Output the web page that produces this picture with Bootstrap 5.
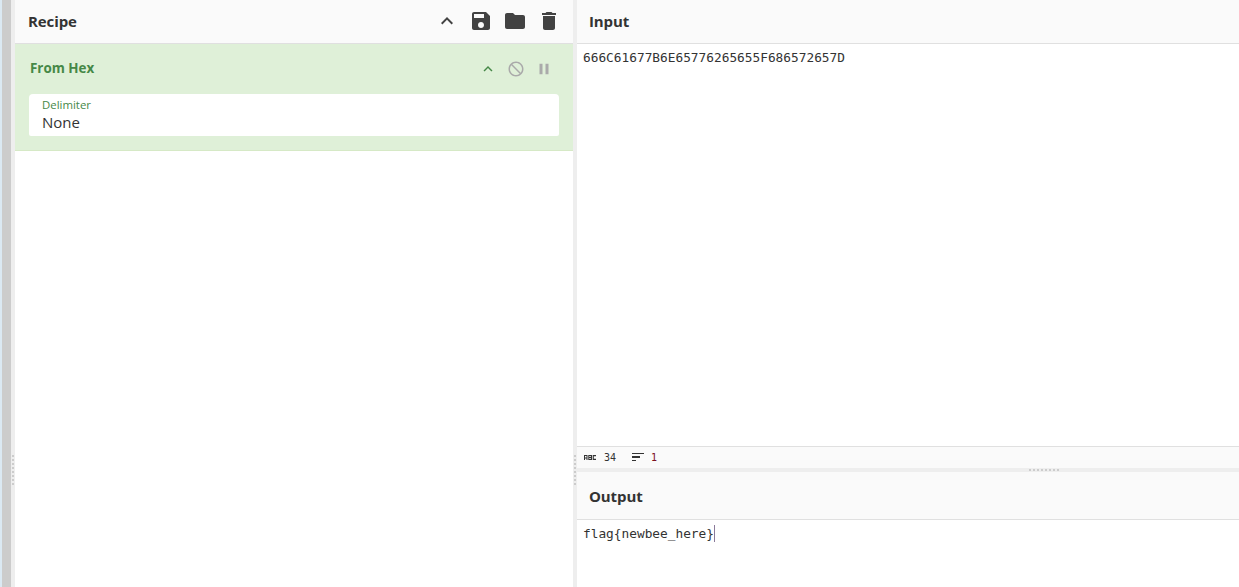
<!DOCTYPE html>
<html lang="en">
<head>
<meta charset="utf-8">
<title>CyberChef</title>
<link href="https://cdn.jsdelivr.net/npm/bootstrap@5.3.0/dist/css/bootstrap.min.css" rel="stylesheet">
<style>
html,body{height:100%;margin:0;overflow:hidden;background:#fff;font-family:"Open Sans","Noto Sans",sans-serif;color:#333}
.shell{height:587px}
.edge{width:2px;background:#dbe9f3}
.opsbar{width:9px;background:#ccc}
.gutter-v{width:4px;background:#eee;flex:none;gap:2px;padding-top:353px}
.dot{width:2px;height:2px;background:#ccc;flex:none}
.recipe{width:558px;flex:none}
.pane-head{height:44px;background:#fafafa;border-bottom:1px solid #e0e0e0;padding:0 12px 0 13px;flex:none}
.pane-head-out{height:48px;padding-top:2px}
.pane-title{font-size:15px;font-weight:700;color:#333;line-height:1;letter-spacing:-.1px}
.pane-title-right{margin-left:-1px}
.head-icons{gap:10px;margin-bottom:2px}
.head-icons svg{display:block;fill:#424242}
.opcard{height:107px;background:#dff0d8;border-bottom:1px solid #d6e9c6;padding:0 14px;flex:none}
.op-top{height:50px;padding-bottom:1px}
.op-name{font-size:13.4px;font-weight:700;color:#468847;margin-left:1px}
.op-icons{gap:10px;margin-right:6px}
.ban{transform:scaleX(-1)}
.ing{height:42px;width:530px;background:#fff;border-radius:4px 4px 2px 2px;padding:3px 13px 0}
.ing-label{font-size:11.4px;line-height:15px;color:#468847}
.ing-val{font-size:15px;line-height:21px;color:#333}
.mono{font-family:"DejaVu Sans Mono","Liberation Mono",monospace;font-size:12.8px;color:#333;line-height:17px}
.input-body{height:402px;padding:5px 6px}
.status{height:22px;background:#fafafa;border-top:1px solid #e0e0e0;padding-left:7px;font-family:"DejaVu Sans Mono",monospace;font-size:10px;flex:none}
.gutter-h{height:4px;background:#eee;gap:2px;flex:none;padding-left:272px}
.output-body{padding:5px 6px}
.caret{display:inline-block;width:1px;height:17px;background:#8a7a9a;vertical-align:top}
.right{min-width:0}
.stat-gap{margin-left:8px}
.stat-gap2{margin-left:16px}
.num2{color:#7a1020;margin-left:7px}
</style>
</head>
<body>
<div class="shell d-flex">
  <div class="edge"></div>
  <div class="opsbar"></div>
  <div class="gutter-v d-flex flex-column align-items-center justify-content-center"><span class="dot"></span><span class="dot"></span><span class="dot"></span><span class="dot"></span><span class="dot"></span><span class="dot"></span><span class="dot"></span><span class="dot"></span></div>
  <section class="recipe d-flex flex-column">
    <header class="pane-head d-flex align-items-center justify-content-between">
      <span class="pane-title">Recipe</span>
      <div class="head-icons d-flex align-items-center">
        <svg width="24" height="24" viewBox="0 0 24 24"><path d="M7.4 15.4 12 10.800l4.600 4.600L18 14l-6-6-6 6z"/></svg>
        <svg width="24" height="24" viewBox="0 0 24 24"><path d="M17 3H5c-1.100 0-2 .9-2 2v14c0 1.100.9 2 2 2h14c1.100 0 2-.9 2-2V7l-4-4zm-5 16c-1.700 0-3-1.300-3-3s1.300-3 3-3 3 1.300 3 3-1.300 3-3 3zm3-10H5V5h10v4z"/></svg>
        <svg width="24" height="24" viewBox="0 0 24 24"><path d="M10 4H4c-1.100 0-2 .9-2 2v12c0 1.100.9 2 2 2h16c1.100 0 2-.9 2-2V8c0-1.100-.9-2-2-2h-8l-2-2z"/></svg>
        <svg width="24" height="24" viewBox="0 0 24 24"><path d="M6 19c0 1.100.9 2 2 2h8c1.100 0 2-.9 2-2V7H6v12zM19 4h-3.500l-1-1h-5l-1 1H5v2h14V4z"/></svg>
      </div>
    </header>
    <div class="opcard">
      <div class="op-top d-flex align-items-center justify-content-between">
        <span class="op-name">From Hex</span>
        <div class="op-icons d-flex align-items-center">
          <svg width="18" height="18" viewBox="0 0 24 24" fill="#468847"><path d="M7.400 15.400 12 10.800l4.600 4.600L18 14l-6-6-6 6z"/></svg>
          <svg class="ban" width="18" height="18" viewBox="0 0 24 24" fill="#aaa"><path d="M12 2C6.500 2 2 6.500 2 12s4.500 10 10 10 10-4.500 10-10S17.500 2 12 2zM4 12c0-4.400 3.600-8 8-8 1.800 0 3.500.6 4.900 1.700L5.700 16.900C4.600 15.500 4 13.800 4 12zm8 8c-1.800 0-3.500-.6-4.900-1.700L18.300 7.100C19.400 8.500 20 10.200 20 12c0 4.400-3.600 8-8 8z"/></svg>
          <svg width="18" height="18" viewBox="0 0 24 24" fill="#aaa"><path d="M6 19h4V5H6v14zm8-14v14h4V5h-4z"/></svg>
        </div>
      </div>
      <div class="ing">
        <div class="ing-label">Delimiter</div>
        <div class="ing-val">None</div>
      </div>
    </div>
  </section>
  <div class="gutter-v d-flex flex-column align-items-center justify-content-center"><span class="dot"></span><span class="dot"></span><span class="dot"></span><span class="dot"></span><span class="dot"></span><span class="dot"></span><span class="dot"></span><span class="dot"></span></div>
  <main class="right flex-grow-1 d-flex flex-column">
    <header class="pane-head d-flex align-items-center"><span class="pane-title pane-title-right">Input</span></header>
    <div class="input-body mono">666C61677B6E65776265655F686572657D</div>
    <div class="status d-flex align-items-center">
      <svg width="12" height="5" viewBox="0 0 12 5" fill="#333"><path d="M0 0h3.500v5H2.500V3.500H1V5H0zM1 1v1.500h1.500V1zM4.300 0H8v5H4.300zM5.300 1v1h1.500V1zm0 2v1h1.500V3zM8.700 0H12v1.200H9.800v2.600H12V5H8.700z"/></svg>
      <span class="stat-gap">34</span>
      <svg class="stat-gap2" width="12" height="9" viewBox="0 0 12 9" fill="#333"><rect width="12" height="1"/><rect y="3" width="8" height="2"/><rect y="7" width="4" height="1"/></svg>
      <span class="num2">1</span>
    </div>
    <div class="gutter-h d-flex align-items-center justify-content-center"><span class="dot"></span><span class="dot"></span><span class="dot"></span><span class="dot"></span><span class="dot"></span><span class="dot"></span><span class="dot"></span><span class="dot"></span></div>
    <header class="pane-head pane-head-out d-flex align-items-center"><span class="pane-title pane-title-right">Output</span></header>
    <div class="output-body mono">flag{newbee_here}<span class="caret"></span></div>
  </main>
</div>
</body>
</html>
